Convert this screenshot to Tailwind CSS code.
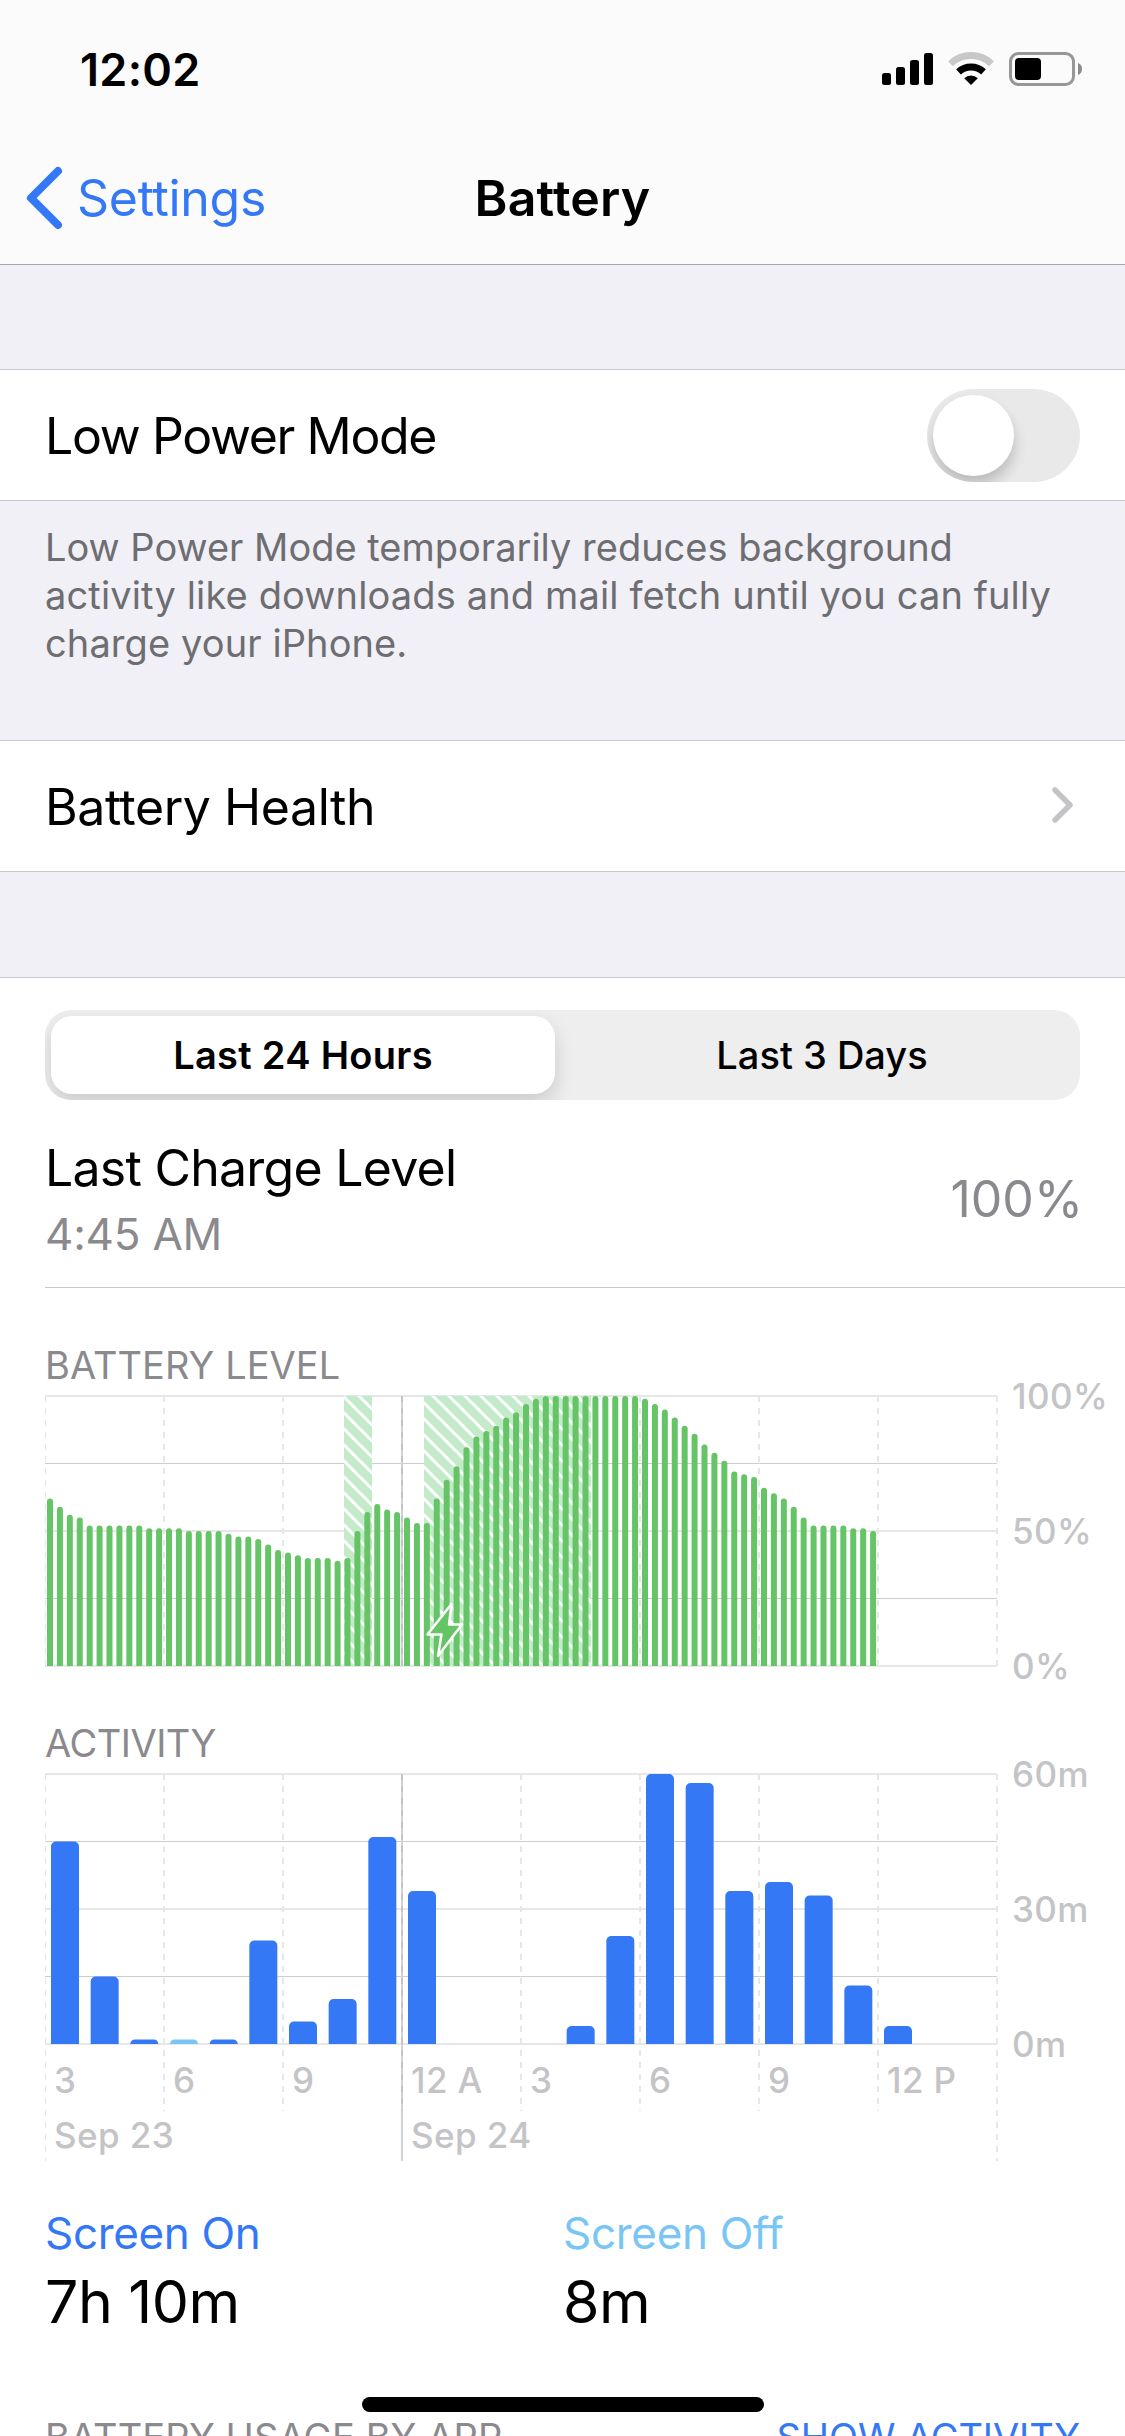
<!DOCTYPE html>
<html lang="en">
<head>
  <meta charset="UTF-8">
  <meta name="viewport" content="width=device-width, initial-scale=1.0">
  <title>Battery</title>
  <script src="https://cdn.jsdelivr.net/npm/@tailwindcss/browser@4"></script>
</head>
<body class="bg-[#f1f0f6] font-['Inter',sans-serif] text-black">
  <div class="relative w-[1125px] h-[2436px] overflow-hidden">
    <!-- Status bar + navigation -->
    <header class="h-[265px] bg-[#fbfbfc] border-b border-[#a9a9ac]">
      <div class="h-[138px] flex items-center justify-between pl-[80px] pr-[42px]">
        <span class="text-[45px] leading-none font-semibold tracking-[0.3px]">12:02</span>
        <svg class="w-[202px] h-[36px]" viewBox="0 0 202 36">
          <g fill="#000">
            <rect x="1" y="22" width="9" height="12" rx="2.5"/>
            <rect x="15" y="16" width="9" height="18" rx="2.5"/>
            <rect x="29" y="9" width="9" height="25" rx="2.5"/>
            <rect x="43" y="2" width="9" height="32" rx="2.5"/>
          </g>
          <path d="M69.5 12.7 A30 30 0 0 1 110.500 12.7" fill="none" stroke="#c8c8c8" stroke-width="7"/>
          <path d="M77.500 20.800 A18.500 18.500 0 0 1 102.500 20.800" fill="none" stroke="#000" stroke-width="7"/>
          <path d="M90 34 L83.200 27.300 A9.800 9.800 0 0 1 96.800 27.300 Z" fill="#000"/>
          <rect x="129.500" y="2.500" width="63" height="31" rx="8" fill="none" stroke="#979797" stroke-width="3"/>
          <rect x="134" y="7" width="26" height="22" rx="4" fill="#000"/>
          <path d="M197 12 a6.500 6.500 0 0 1 0 12 Z" fill="#8c8c8c"/>
        </svg>
      </div>
      <div class="h-[126px] grid grid-cols-3 items-center pb-[7px]">
        <a href="#" class="flex items-center gap-[14px] pl-[25px] text-[#3478f6] text-[50px] leading-none tracking-[-0.3px]">
          <svg class="w-[38px] h-[64px]" viewBox="0 0 38 64" fill="none" stroke="#3478f6" stroke-width="8" stroke-linecap="round" stroke-linejoin="round"><path d="M33 5 L6 32 L33 59"/></svg>
          <span>Settings</span>
        </a>
        <h1 class="text-center text-[50px] leading-none font-semibold tracking-[0.2px]">Battery</h1>
      </div>
    </header>

    <!-- Low power mode -->
    <section class="mt-[104px] h-[132px] bg-white border-y border-[#c8c7cc] flex items-center justify-between px-[45px]">
      <span class="pt-[2px] text-[50px] leading-none tracking-[-1.35px]">Low Power Mode</span>
      <button aria-label="Low Power Mode" class="w-[153px] h-[93px] p-[6px] rounded-full bg-[#e9e9ea] overflow-hidden">
        <span class="block size-[81px] rounded-full bg-white shadow-[0_9px_14px_rgba(0,0,0,0.2)]"></span>
      </button>
    </section>
    <p class="h-[239px] pt-[22px] pl-[45px] text-[38px] leading-[48px] text-[#6d6d72]">Low Power Mode temporarily reduces background<br><span class="tracking-[0.14px]">activity like downloads and mail fetch until you can fully</span><br><span class="tracking-[0.1px]">charge your iPhone.</span></p>

    <!-- Battery health -->
    <section class="h-[132px] bg-white border-y border-[#c8c7cc] flex items-center justify-between pl-[45px] pr-[49px]">
      <span class="pt-[2px] text-[50px] leading-none tracking-[-0.45px]">Battery Health</span>
      <svg class="w-[26px] h-[40px]" viewBox="0 0 26 40" fill="none" stroke="#c4c4c6" stroke-width="5.500" stroke-linecap="round" stroke-linejoin="round"><path d="M5 4 L20 19 L5 34"/></svg>
    </section>

    <!-- Usage -->
    <section class="mt-[105px] h-[1460px] bg-white border-t border-[#c8c7cc] pt-[32px]">
      <div class="mx-[45px] h-[90px] rounded-[26px] bg-[#eeeeef] p-[6px] grid grid-cols-[504px_1fr] overflow-hidden text-[38px] leading-none">
        <button class="rounded-[21px] bg-white font-semibold tracking-[0.3px] shadow-[0_9px_20px_rgba(0,0,0,0.15)]">Last 24 Hours</button>
        <button class="font-medium pl-[15px]">Last 3 Days</button>
      </div>

      <div class="ml-[45px] pr-[42px] h-[188px] border-b border-[#c8c7cc] flex items-center justify-between">
        <div class="pt-[14px]">
          <div class="text-[50px] leading-[66px] tracking-[-0.75px]">Last Charge Level</div>
          <div class="text-[44px] leading-[66px] tracking-[-0.25px] text-[#8a8a8e]">4:45 AM</div>
        </div>
        <div class="text-[50px] leading-none text-[#8a8a8e] pt-[11px]">100%</div>
      </div>

      <h2 class="mt-[53px] ml-[45px] text-[38px] leading-[48px] tracking-[0.05px] text-[#8a8a8e]">BATTERY LEVEL</h2>
      <svg id="level" class="block w-[1125px] h-[330px] overflow-visible" viewBox="0 1389 1125 330"></svg>
      <h2 class="ml-[45px] text-[38px] leading-[48px] tracking-[-0.5px] text-[#8a8a8e]">ACTIVITY</h2>
      <svg id="activity" class="block w-[1125px] h-[430px] overflow-visible" viewBox="0 1767 1125 430"></svg>

      <div class="grid grid-cols-2 pl-[45px]">
        <div>
          <div class="text-[44px] leading-[72px] tracking-[-0.35px] text-[#3478f6]">Screen On</div>
          <div class="text-[59px] leading-[66px] tracking-[-0.5px]">7h 10m</div>
        </div>
        <div class="-ml-[22px]">
          <div class="text-[44px] leading-[72px] tracking-[-0.3px] text-[#79c5f5]">Screen Off</div>
          <div class="text-[59px] leading-[66px] tracking-[-0.5px]">8m</div>
        </div>
      </div>

      <div class="mt-[78px] px-[45px] flex justify-between text-[38px] leading-[48px]">
        <span class="tracking-[0.1px] text-[#8a8a8e]">BATTERY USAGE BY APP</span>
        <a href="#" class="tracking-[-0.1px] text-[#3478f6]">SHOW ACTIVITY</a>
      </div>
    </section>

    <!-- Home indicator -->
    <div class="absolute left-[362px] top-[2397px] w-[402px] h-[15px] rounded-full bg-black"></div>
  </div>

  <script>
    const LEFT = 45, RIGHT = 997, HEIGHT = 270, MIDNIGHT = 402;
    const levels = [
      62, 59, 56, 55, 52, 52, 52, 52, 52, 52, 51, 51, 51, 51, 50, 50, 50, 50, 49, 48, 48,
      47, 45, 43, 42, 41, 40, 40, 40, 39, 40, 50, 57, 60, 58, 57, 55, 53, 53, 62, 69, 74,
      81, 85, 87, 89, 92, 94, 97, 99, 100, 100, 100, 100, 100, 100, 100, 100, 100, 100,
      99, 97, 95, 92, 89, 86, 82, 79, 76, 72, 71, 70, 66, 64, 62, 59, 55, 52, 52, 52, 52, 51, 51, 50,
    ];
    const minutes = [45, 15, 1, 1, 1, 23, 5, 10, 46, 34, 0, 0, 0, 4, 24, 60, 58, 34, 36, 33, 13, 4];
    // x, width and stripe offset of each charging period
    const charging = [[344, 28, 1], [424, 167, 7]];

    // Horizontal rules, dashed hour lines and the solid midnight line
    function grid(top, tickEnd, dayEnd) {
      let out = '';
      for (let i = 0; i <= 4; i++) {
        const y = top + i * 67.5;
        out += i % 2
          ? `<rect x="${LEFT}" y="${Math.floor(y)}" width="${RIGHT - LEFT}" height="1" fill="#cdcdcf"/>`
          : `<rect x="${LEFT}" y="${y - 1}" width="${RIGHT - LEFT}" height="2" fill="#e7e7e8"/>`;
      }
      for (let i = 0; i <= 8; i++) {
        const x = LEFT + i * 119;
        const end = i === 0 || i === 3 || i === 8 ? dayEnd : tickEnd;
        if (x === MIDNIGHT) out += `<rect x="${x - 1}" y="${top}" width="2" height="${end - top}" fill="#d2d2d4"/>`;
        const stop = x === MIDNIGHT ? tickEnd : end;
        out += i === 0
          ? `<path d="M${x + 0.5} ${top}V${stop}" stroke="#e7e7e8" stroke-width="1" stroke-dasharray="6 6"/>`
          : `<path d="M${x} ${top}V${stop}" stroke="${x === MIDNIGHT ? '#c3c3c5' : '#e7e7e8'}" stroke-width="2" stroke-dasharray="6 6"/>`;
      }
      return out;
    }

    function bar(x, base, w, h, r, fill) {
      r = Math.min(r, h);
      return `<path d="M${x} ${base}v${r - h}a${r} ${r} 0 0 1 ${r} ${-r}h${w - 2 * r}a${r} ${r} 0 0 1 ${r} ${r}v${h - r}z" fill="${fill}"/>`;
    }

    function label(x, y, text) {
      return `<text x="${x}" y="${y}" class="text-[35px] font-medium tracking-[0.4px] fill-[#c4c4c6]">${text}</text>`;
    }

    let level = grid(1396, 1666, 1666);
    charging.forEach(([x, w, offset], i) => {
      level += `<pattern id="stripes${i}" x="${x}" y="${1396 + offset}" width="16" height="16" patternUnits="userSpaceOnUse">
        <rect width="16" height="16" fill="#c3eac9"/>
        <path d="M-4 -4L20 20M-4 12L4 20M12 -4L20 4" stroke="#fff" stroke-width="3"/></pattern>
        <rect x="${x}" y="1396" width="${w}" height="${HEIGHT}" fill="url(#stripes${i})"/>`;
    });
    levels.forEach((v, i) => {
      level += bar(LEFT + 2 + i * 119 / 12, 1666, 6, v * 2.7, 3, '#65c466');
    });
    level += '<path d="M451.500 1604L427.500 1634.500H441.500L438 1656L462 1624.500H449Z" fill="#65c466" stroke="#fff" stroke-width="2.500" stroke-linejoin="round"/>';
    level += label(1012, 1409, '100%') + label(1012, 1544, '50%') + label(1012, 1679, '0%');
    document.getElementById('level').innerHTML = level;

    let activity = grid(1774, 2111, 2161);
    minutes.forEach((v, i) => {
      if (v) activity += bar(51 + i * 119 / 3, 2044, 28, v * 4.5, 5, i === 3 ? '#79c5f5' : '#3478f6');
    });
    ['3', '6', '9', '12 A', '3', '6', '9', '12 P'].forEach((t, i) => {
      activity += label(54 + i * 119, 2093, t);
    });
    activity += label(54, 2148, 'Sep 23') + label(411, 2148, 'Sep 24');
    activity += label(1012, 1787, '60m') + label(1012, 1922, '30m') + label(1012, 2057, '0m');
    document.getElementById('activity').innerHTML = activity;
  </script>
</body>
</html>
